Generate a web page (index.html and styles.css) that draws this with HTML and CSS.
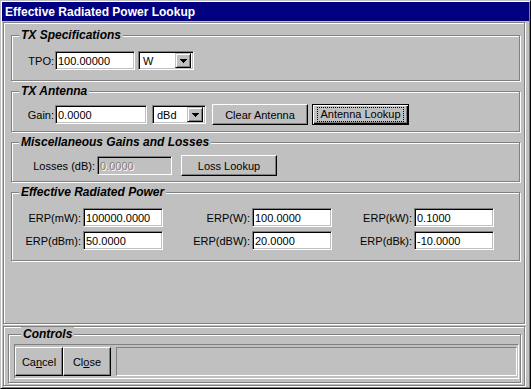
FILE: index.html
```html
<!DOCTYPE html>
<html lang="en">
<head>
    <meta charset="UTF-8">
    <title>Effective Radiated Power Lookup</title>
    <link rel="stylesheet" href="styles.css">
</head>
<body>
    <div class="window">
        <div class="titlebar">Effective Radiated Power Lookup</div>
        <div class="client">
            <div class="panel main-panel">
                <fieldset class="group group-tx">
                    <legend>TX Specifications</legend>
                    <div class="row">
                        <label class="lbl lbl-short" for="tpo">TPO:</label>
                        <input class="field f-tpo" id="tpo" type="text" value="100.00000">
                        <div class="combo c-tpo">
                            <span class="combo-val">W</span>
                            <span class="combo-btn"><svg width="7" height="4" viewBox="0 0 7 4"><path d="M0 0h7v1h-1v1h-1v1h-1v1h-1v-1h-1v-1h-1v-1h-1z"/></svg></span>
                        </div>
                    </div>
                </fieldset>

                <fieldset class="group group-ant">
                    <legend>TX Antenna</legend>
                    <div class="row">
                        <label class="lbl lbl-short" for="gain">Gain:</label>
                        <input class="field f-gain" id="gain" type="text" value="0.0000">
                        <div class="combo c-gain">
                            <span class="combo-val">dBd</span>
                            <span class="combo-btn"><svg width="7" height="4" viewBox="0 0 7 4"><path d="M0 0h7v1h-1v1h-1v1h-1v1h-1v-1h-1v-1h-1v-1h-1z"/></svg></span>
                        </div>
                        <button class="btn b-clear">Clear Antenna</button>
                        <button class="btn btn-default b-lookup"><span class="focus">Antenna Lookup</span></button>
                    </div>
                </fieldset>

                <fieldset class="group group-misc">
                    <legend>Miscellaneous Gains and Losses</legend>
                    <div class="row">
                        <label class="lbl lbl-long" for="losses">Losses (dB):</label>
                        <input class="field f-loss" id="losses" type="text" value="0.0000" disabled>
                        <button class="btn b-loss">Loss Lookup</button>
                    </div>
                </fieldset>

                <fieldset class="group group-erp">
                    <legend>Effective Radiated Power</legend>
                    <div class="erp-grid">
                        <label class="lbl">ERP(mW):</label>
                        <input class="field" type="text" value="100000.0000">
                        <label class="lbl">ERP(W):</label>
                        <input class="field" type="text" value="100.0000">
                        <label class="lbl">ERP(kW):</label>
                        <input class="field" type="text" value="0.1000">
                        <label class="lbl">ERP(dBm):</label>
                        <input class="field" type="text" value="50.0000">
                        <label class="lbl">ERP(dBW):</label>
                        <input class="field" type="text" value="20.0000">
                        <label class="lbl">ERP(dBk):</label>
                        <input class="field" type="text" value="-10.0000">
                    </div>
                </fieldset>
            </div>

            <div class="panel controls-panel">
                <fieldset class="group group-ctl">
                    <legend>Controls</legend>
                    <div class="ctl-box">
                        <button class="btn b-ctl">Ca<u>n</u>cel</button>
                        <button class="btn b-ctl">Cl<u>o</u>se</button>
                        <div class="status"></div>
                    </div>
                </fieldset>
            </div>
        </div>
    </div>
</body>
</html>
```

FILE: styles.css
```css
body {
    margin: 0;
    background-color: #c0c0c0;
    font-family: "Liberation Sans", Arial, sans-serif;
    font-size: 11px;
    color: black;
}

.window {
    width: 531px;
    height: 389px;
    box-sizing: border-box;
    border: 1px solid;
    border-color: #c0c0c0 black black #c0c0c0;
    box-shadow: inset 1px 1px white, inset -1px -1px #808080;
    padding: 1px;
    display: flex;
    flex-direction: column;
}

.titlebar {
    height: 19px;
    box-sizing: border-box;
    background-color: #000080;
    color: white;
    font-weight: bold;
    font-size: 12px;
    line-height: 18px;
    padding: 1px 0 0 3px;
}

.client {
    flex: 1;
    display: flex;
    flex-direction: column;
    padding: 1px 4px 2px 1px;
}

/* etched frames */
.panel {
    border: 1px solid #808080;
    box-shadow: inset 1px 1px white, 1px 1px white;
}

.main-panel {
    height: 302px;
    box-sizing: border-box;
    padding: 5px 4px 0 7px;
}

.controls-panel {
    margin-top: 2px;
    flex: 1;
    padding: 0 3px 2px 4px;
}

.group {
    margin: 0;
    padding: 0;
    min-width: 0;
    border: 1px solid #808080;
    box-shadow: inset 1px 1px white, 1px 1px white;
}

.group legend {
    margin-left: 7px;
    padding: 0 2px;
    background-color: #c0c0c0;
    font-size: 12px;
    font-weight: bold;
    font-style: italic;
    line-height: 14px;
}

.group + .group {
    margin-top: 3px;
}

.group-tx { padding: 8px 0 9px; }
.group-ant { padding: 6px 0 6px; }
.group-misc { padding: 6px 0 5px; }
.group-erp { padding: 9px 0 10px; }

.row {
    display: flex;
    align-items: center;
    height: 21px;
}

.lbl {
    text-align: right;
    padding-right: 1px;
    white-space: nowrap;
}

.lbl-short { width: 42px; }
.lbl-long { width: 83px; }

/* sunken edit box */
.field {
    height: 19px;
    box-sizing: border-box;
    margin: 0;
    padding: 1px 2px 0;
    border: 1px solid;
    border-color: #808080 white white #808080;
    box-shadow: inset 1px 1px black, inset -1px -1px #c0c0c0;
    background-color: white;
    font-family: inherit;
    font-size: 11px;
    color: black;
    outline: none;
}

.field:disabled {
    background-color: #c0c0c0;
    color: #808080;
    text-shadow: 1px 1px white;
}

.f-tpo { width: 80px; }
.f-gain { width: 92px; }
.f-loss { width: 75px; margin-left: 1px; }

.combo {
    height: 19px;
    box-sizing: border-box;
    display: flex;
    align-items: center;
    border: 1px solid;
    border-color: #808080 white white #808080;
    box-shadow: inset 1px 1px black, inset -1px -1px #c0c0c0;
    background-color: white;
    padding: 2px;
}

.combo-val {
    flex: 1;
    padding-left: 2px;
}

.combo-btn {
    width: 16px;
    height: 15px;
    box-sizing: border-box;
    display: flex;
    align-items: center;
    justify-content: center;
    background-color: #c0c0c0;
    border: 1px solid;
    border-color: #c0c0c0 black black #c0c0c0;
    box-shadow: inset 1px 1px white, inset -1px -1px #808080;
}

.c-tpo { width: 56px; margin-left: 3px; }
.c-gain { width: 54px; margin-left: 5px; }

/* raised push button */
.btn {
    height: 21px;
    box-sizing: border-box;
    margin: 0;
    padding: 0;
    border: 1px solid;
    border-color: white black black white;
    box-shadow: inset -1px -1px #808080;
    background-color: #c0c0c0;
    font-family: inherit;
    font-size: 11px;
    color: black;
}

.btn-default {
    border-color: black;
    box-shadow: inset 1px 1px white, inset -1px -1px black, inset -2px -2px #808080;
}

.focus {
    display: inline-block;
    outline: 1px dotted black;
    padding: 0 2px;
    line-height: 13px;
}

.b-clear { width: 96px; margin-left: 6px; }
.b-lookup { width: 97px; margin-left: 4px; }
.b-loss { width: 96px; margin-left: 9px; }

.erp-grid {
    display: grid;
    grid-template-columns: 71px 80px 89px 80px 82px 80px;
    row-gap: 4px;
    align-items: center;
}

.erp-grid .lbl {
    padding-right: 2px;
}

.group-ctl {
    padding: 3px 1px 3px 5px;
    height: 100%;
    box-sizing: border-box;
}

.ctl-box {
    display: flex;
    border: 1px solid;
    border-color: #808080 white white #808080;
    padding: 2px 0 2px 0;
}

.b-ctl {
    width: 48px;
    height: 29px;
}

.status {
    flex: 1;
    margin: 0 1px 0 5px;
    border: 1px solid;
    border-color: #808080 white white #808080;
}
```
